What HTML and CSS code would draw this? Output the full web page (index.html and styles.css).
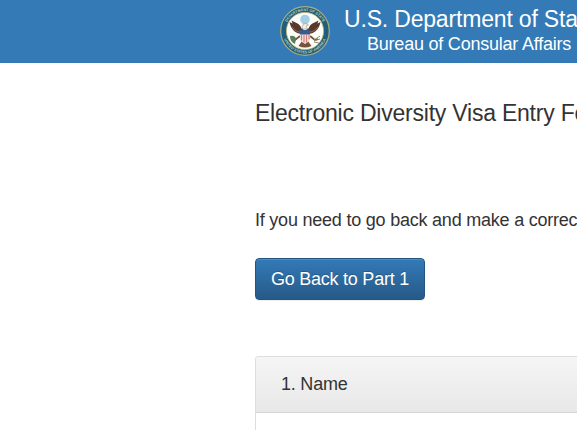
FILE: index.html
```html
<!DOCTYPE html>
<html lang="en">
<head>
<meta charset="utf-8">
<title>Electronic Diversity Visa Entry Form</title>
<link rel="stylesheet" href="styles.css">
</head>
<body>
<header class="banner">
  <svg class="seal" viewBox="0 0 50 50" aria-hidden="true">
    <defs>
      <path id="ring-top" d="M5 25a20 20 0 0 1 40 0"/>
      <path id="ring-bottom" d="M2.600 25a22.400 22.400 0 0 0 44.800 0"/>
    </defs>
    <circle cx="25" cy="25" r="24.300" fill="#1f5f7c" stroke="#a9ae83" stroke-width="1.200"/>
    <g class="ring-text">
      <text><textPath href="#ring-top" startOffset="50%" text-anchor="middle">DEPARTMENT OF STATE</textPath></text>
      <text><textPath href="#ring-bottom" startOffset="50%" text-anchor="middle">UNITED STATES OF AMERICA</textPath></text>
    </g>
    <circle cx="25" cy="25" r="18.600" fill="#fdfdf8" stroke="#c0b67c" stroke-width=".8"/>
    <circle cx="25" cy="13.500" r="4.800" fill="#a3cfe6"/>
    <path d="M22.500 28C16 28 11 24 9.500 16l3 1.500-1-3 4 2c3 1 5 3 6 6l2 1zM27.500 28C34 28 39 24 40.500 16l-3 1.500 1-3-4 2c-3 1-5 3-6 6l-2 1z" fill="#59392c"/>
    <path d="M12 21c3 4 6 5 9 5M38 21c-3 4-6 5-9 5" fill="none" stroke="#a17b4d" stroke-width=".8"/>
    <path d="M20 30l-5 4-3-1M30 30l5 4 3-1" fill="none" stroke="#755542" stroke-width="1.800"/>
    <path d="M22 35l-3.500 5q6.500 3 13 0L28 35z" fill="#76533d"/>
    <path d="M10 30q4-1 6 2l-1 6q-5-2-5-8z" fill="#55805e"/>
    <path d="M34 34l6-4M34 35l6-2M34 36l5 1" stroke="#918967" stroke-width="1"/>
    <path d="M22 21q1-4 4-3.500l2.500 1.500-2.500 1 1.500 3h-5z" fill="#f4f0e4" stroke="#977b61" stroke-width=".5"/>
    <path d="M20 24h10v9q-1 3-5 5-4-2-5-5z" fill="#f6dedb"/>
    <path d="M20 24h10v4.500h-10z" fill="#315d93"/>
    <path d="M21.500 28.500v6M24 28.500v8M26.500 28.500v8M29 28.500v5" stroke="#d27c78" stroke-width="1.100"/>
  </svg>
  <div class="agency">
    <div class="department">U.S. Department of State</div>
    <div class="bureau">Bureau of Consular Affairs</div>
  </div>
</header>
<main class="content">
  <h1 class="title">Electronic Diversity Visa Entry Form</h1>
  <p class="intro">If you need to go back and make a correction</p>
  <button class="back" type="button">Go Back to Part 1</button>
  <section class="panel">
    <h2 class="panel-heading">1. Name</h2>
    <div class="panel-body"></div>
  </section>
</main>
</body>
</html>
```
FILE: styles.css
```css
* { box-sizing: border-box; }
html, body { height: 100%; overflow: hidden; }
body {
  margin: 0;
  background: #fff;
  color: #333;
  font: 18px/26px "Liberation Sans", Arial, sans-serif;
  letter-spacing: -.22px;
  white-space: nowrap;
}
.banner {
  display: flex;
  height: 63px;
  padding: 6px 0 0 280px;
  background: #337ab7;
  color: #fff;
}
.seal { flex: none; width: 50px; height: 50px; letter-spacing: 0; }
.ring-text { fill: #b8cbb4; font-size: 3.7px; font-weight: bold; }
.agency { flex: none; margin-left: 14px; }
.department { font-size: 23px; line-height: 26px; letter-spacing: -.18px; }
.bureau { padding-left: 23px; line-height: 24px; letter-spacing: -.22px; }
.content { width: 577px; padding: 36px 0 0 255px; }
.title { margin: 0; font-size: 23px; font-weight: normal; line-height: 28px; letter-spacing: -.22px; }
.intro { margin: 80px 0 0; }
.back {
  display: block;
  width: 170px;
  height: 42px;
  margin: 25px 0 0;
  padding: 0;
  border: 1px solid #245580;
  border-radius: 4px;
  background: linear-gradient(#337ab7, #265a88);
  box-shadow: inset 0 1px 0 rgba(255,255,255,.15), 0 1px 1px rgba(0,0,0,.075);
  color: #fff;
  font: 18px/24px "Liberation Sans", Arial, sans-serif;
  letter-spacing: -.25px;
  text-shadow: 0 -1px 0 rgba(0,0,0,.2);
}
.panel {
  height: 74px;
  margin-top: 56px;
  border: 1px solid #ddd;
  border-width: 1px 0 0 1px;
  border-radius: 4px 0 0;
}
.panel-heading {
  height: 56px;
  margin: 0;
  padding: 14px 25px;
  border-bottom: 1px solid #d5d5d5;
  border-radius: 3px 0 0;
  background: linear-gradient(#f5f5f5, #e8e8e8);
  font-size: 18px;
  font-weight: normal;
  line-height: 26px;
}
```
